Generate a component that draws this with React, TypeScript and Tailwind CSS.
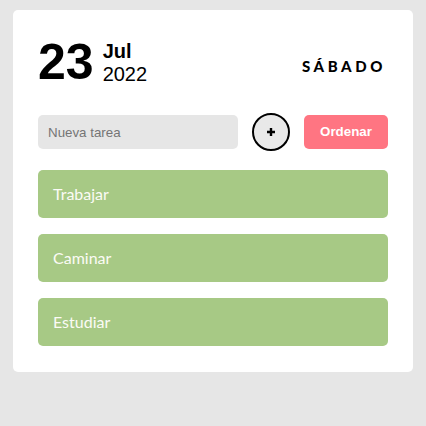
import React from 'react';

export default function App() {
  const tasks = ['Trabajar', 'Caminar', 'Estudiar'];

  return (
    <div className="w-full min-h-[426px] bg-[#e6e6e6] pt-[10px] pl-[13px]">
      <div className="w-[400px] bg-white rounded-[5px] px-[25px] pt-[24px] pb-[26px]">
        {/* Header */}
        <div className="flex items-end justify-between font-['Liberation_Sans',Arial,sans-serif] text-black">
          <div className="flex items-end">
            <span className="text-[50px] font-bold leading-[57px]">23</span>
            <div className="flex flex-col ml-[9px] mb-[5px]">
              <span className="text-[20px] font-bold leading-[23px]">Jul</span>
              <span className="text-[20px] leading-[23px]">2022</span>
            </div>
          </div>
          <span className="font-['Lato',sans-serif] font-black text-[15px] tracking-[0.24em] mb-[14px] mr-[2px]">SÁBADO</span>
        </div>

        {/* Input row */}
        <div className="flex items-center justify-between mt-[22px] font-['Liberation_Sans',Arial,sans-serif]">
          <input
            className="w-[200px] h-[34px] bg-[#e6e6e6] rounded-[5px] px-[10px] text-[13.33px] text-black placeholder:text-[#757575] outline-none"
            placeholder="Nueva tarea"
          />
          <button className="w-[38px] h-[38px] rounded-full border-2 border-black bg-[#e9e9e9] flex items-center justify-center">
            <svg width="10" height="10" viewBox="0 0 10 10">
              <path d="M5 1v8M1 5h8" stroke="#000" strokeWidth="2.4" />
            </svg>
          </button>
          <button className="w-[84px] h-[34px] rounded-[5px] bg-[#ff7582] text-white font-bold text-[13.33px]">Ordenar</button>
        </div>

        {/* Tasks */}
        <div className="flex flex-col gap-[16px] mt-[19px]">
          {tasks.map((t) => (
            <div key={t} className="h-[48px] bg-[#a7c985] rounded-[5px] pl-[15px] flex items-center font-['Lato',sans-serif] text-[16px] text-[#fbfbf5]">
              {t}
            </div>
          ))}
        </div>
      </div>
    </div>
  );
}
